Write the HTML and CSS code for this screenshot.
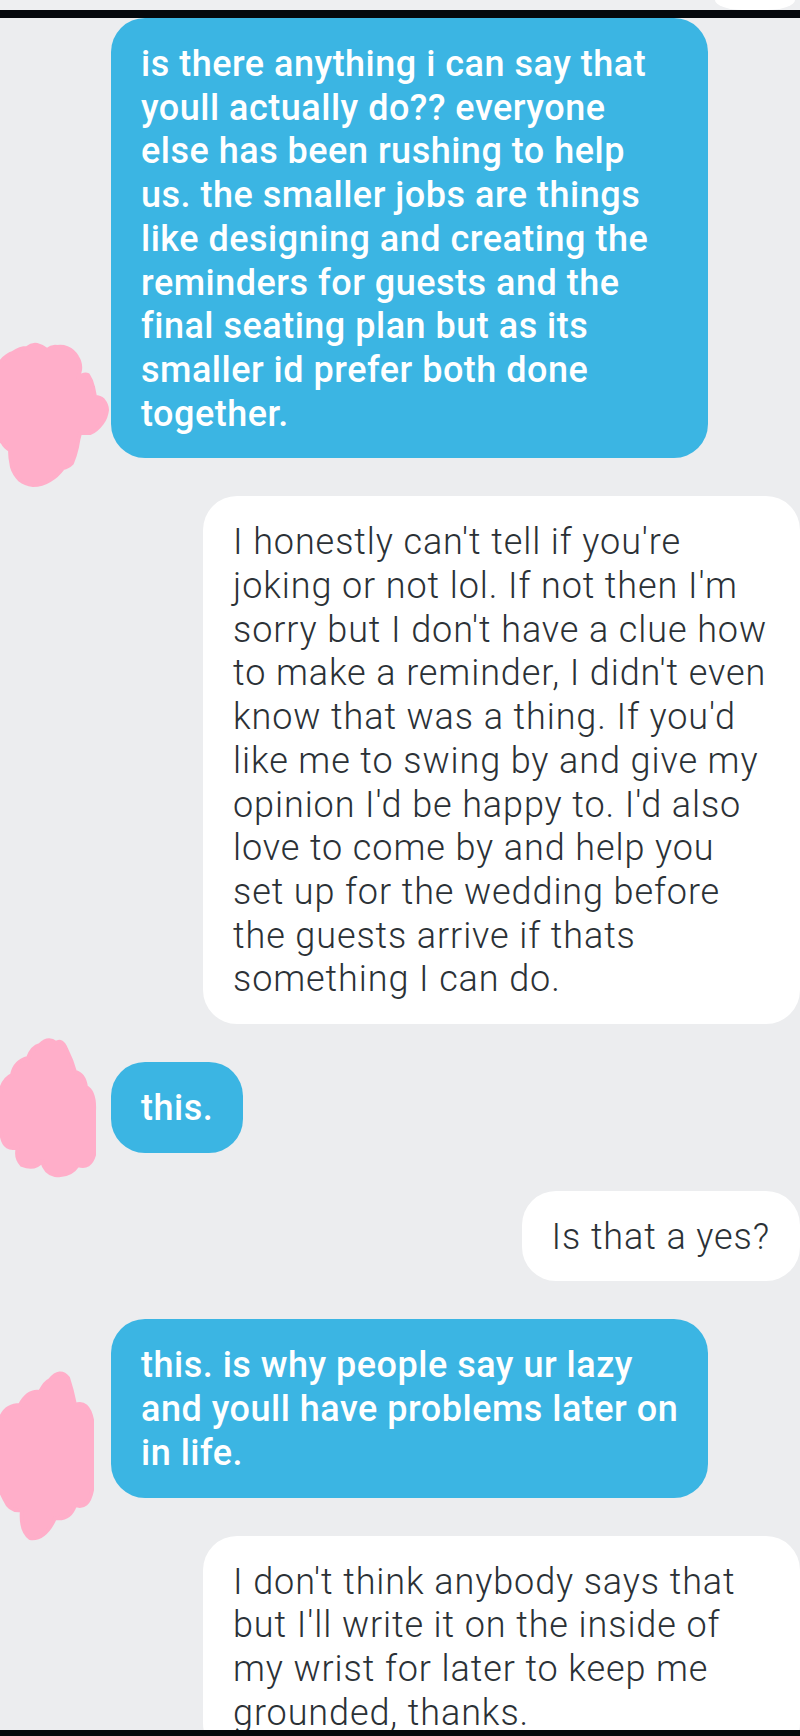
FILE: index.html
```html
<!DOCTYPE html>
<html lang="en">
<head>
<meta charset="utf-8">
<title>Chat</title>
<link rel="stylesheet" href="styles.css">
</head>
<body>
<div class="screen">
  <div class="prev-strip"><div class="prev-bubble"></div></div>
  <div class="bar"></div>
  <div class="chat">
    <div class="row in">
      <svg class="scribble s1" viewBox="0 0 110 145" width="110" height="145"><path d="M0 20 Q6 12 13 10 Q20 5 27 5 Q32 1 37 2 Q42 3 47 7 Q52 3 57 4 Q62 3 67 5 Q74 8 77 14 Q81 20 80 27 L78 35 Q84 30 88 32 Q92 38 93 44 L95 54 Q100 54 103 57 Q107 62 107 67 Q106 75 102 80 Q96 88 90 90 L80 90 Q78 97 77 104 Q75 113 72 120 Q68 124 63 125 Q57 133 50 137 Q42 142 33 142 Q25 141 20 137 Q14 131 12 124 Q10 115 10 107 Q5 104 3 100 L0 97 Z"/></svg>
      <div class="bubble blue wide">is there anything i can say that<br>youll actually do?? everyone<br>else has been rushing to help<br>us. the smaller jobs are things<br>like designing and creating the<br>reminders for guests and the<br>final seating plan but as its<br>smaller id prefer both done<br>together.</div>
    </div>
    <div class="row out">
      <div class="bubble white wide">I honestly can't tell if you're<br>joking or not lol. If not then I'm<br>sorry but I don't have a clue how<br>to make a reminder, I didn't even<br>know that was a thing. If you'd<br>like me to swing by and give my<br>opinion I'd be happy to. I'd also<br>love to come by and help you<br>set up for the wedding before<br>the guests arrive if thats<br>something I can do.</div>
    </div>
    <div class="row in">
      <svg class="scribble s2" viewBox="0 0 97 140" width="97" height="140"><path d="M40 8 Q48 0 56 6 Q62 2 66 12 Q72 24 75 35 Q84 37 86 50 Q95 55 94 74 L94 118 Q90 132 78 128 Q70 140 55 138 Q45 136 42 124 Q35 133 22 128 Q15 121 18 110 Q5 114 2 100 L0 92 L0 56 Q3 42 12 38 Q15 24 28 21 Q32 10 40 8 Z"/></svg>
      <div class="bubble blue">this.</div>
    </div>
    <div class="row out">
      <div class="bubble white">Is that a yes?</div>
    </div>
    <div class="row in">
      <svg class="scribble s3" viewBox="0 0 95 170" width="95" height="170"><path d="M50 10 Q60 -2 68 8 Q72 20 75 35 Q88 30 92 50 L92 120 Q88 140 75 135 Q70 150 55 148 Q45 170 30 168 Q20 160 22 140 Q10 142 5 130 L0 120 L0 50 Q5 35 20 35 Q28 20 40 22 Q45 12 50 10 Z"/></svg>
      <div class="bubble blue wide">this. is why people say ur lazy<br>and youll have problems later on<br>in life.</div>
    </div>
    <div class="row out">
      <div class="bubble white wide">I don't think anybody says that<br>but I'll write it on the inside of<br>my wrist for later to keep me<br>grounded, thanks.</div>
    </div>
  </div>
  <div class="bar bottom-bar"></div>
</div>
</body>
</html>
```

FILE: styles.css
```css
html, body {
  margin: 0;
  padding: 0;
}

body {
  background: #ecedef;
  font-family: Roboto, "Liberation Sans", sans-serif;
}

.screen {
  width: 800px;
  height: 1736px;
  display: flex;
  flex-direction: column;
  overflow: hidden;
  background: #ecedef;
}

.prev-strip {
  flex: none;
  height: 10px;
  display: flex;
  justify-content: flex-end;
  padding-right: 5px;
  background: #eeeff1;
  overflow: hidden;
}

.prev-bubble {
  width: 80px;
  height: 10px;
  background: #ffffff;
  border-radius: 0 0 40px 40px / 0 0 14px 14px;
}

.bar {
  flex: none;
  height: 8px;
  background: #05080c;
}

.bottom-bar {
  height: 6px;
}

.chat {
  flex: 1;
  min-height: 0;
  overflow: hidden;
  display: flex;
  flex-direction: column;
  gap: 38px;
}

.row {
  flex: none;
  display: flex;
  position: relative;
}

.row.in {
  padding-left: 111px;
}

.row.out {
  justify-content: flex-end;
}

.bubble {
  box-sizing: border-box;
  font-size: 36px;
  line-height: 43.7px;
  padding: 25px 30px 22px;
  border-radius: 34px;
  white-space: nowrap;
}

.bubble.wide {
  width: 597px;
}

.blue {
  background: #3bb5e3;
  color: #ffffff;
  font-weight: 500;
  letter-spacing: 0.5px;
}

.white {
  background: #ffffff;
  color: #2b3136;
  font-weight: 300;
  letter-spacing: 0.9px;
}

.scribble {
  position: absolute;
  left: 0;
  fill: #ffaec9;
  stroke: #ffaec9;
  stroke-width: 4;
  stroke-linejoin: round;
  overflow: visible;
}

.s1 {
  top: 325px;
}

.s2 {
  top: -25px;
}

.s3 {
  top: 51px;
}
```
